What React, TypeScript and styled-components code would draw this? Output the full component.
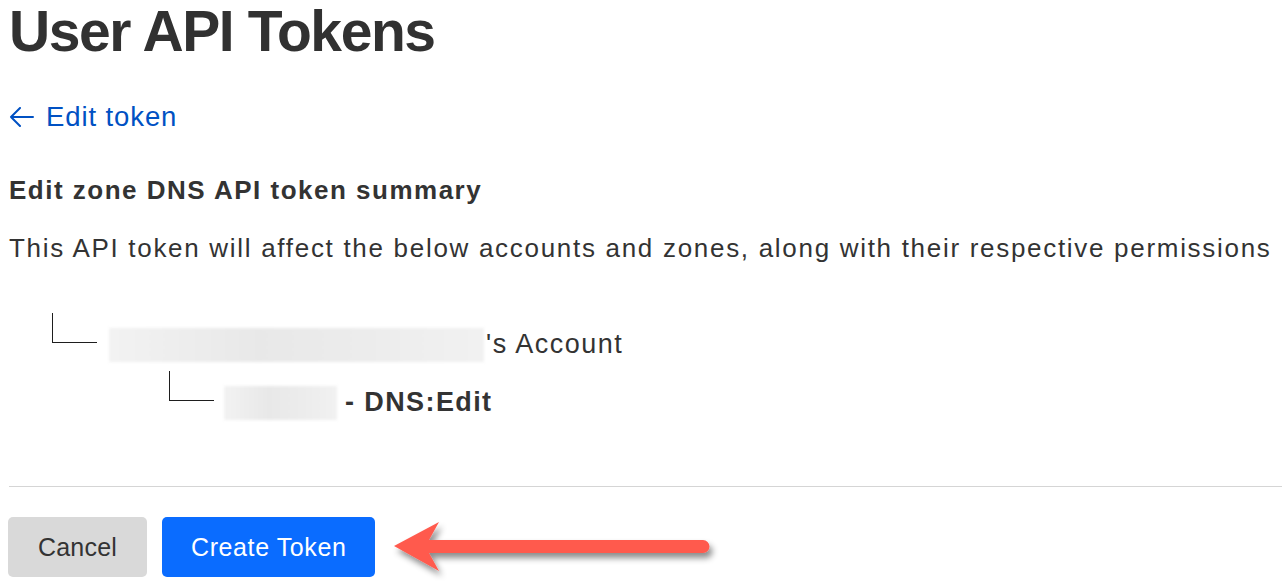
import React from "react";
import styled, { createGlobalStyle } from "styled-components";

const GlobalStyle = createGlobalStyle`
  html, body {
    margin: 0;
    padding: 0;
    background: #ffffff;
  }
  body {
    font-family: "Liberation Sans", Arial, sans-serif;
    color: #333333;
    overflow: hidden;
  }
`;

const Page = styled.div`
  width: 1282px;
  height: 586px;
  padding-left: 9px;
  box-sizing: border-box;
  display: flex;
  flex-direction: column;
`;

const Title = styled.h1`
  margin: 0;
  font-size: 57px;
  line-height: 62px;
  font-weight: 700;
  letter-spacing: -1.4px;
  color: #313131;
`;

const BackLink = styled.a`
  display: flex;
  align-items: center;
  gap: 12px;
  margin-top: 37px;
  font-size: 27.5px;
  line-height: 36px;
  letter-spacing: 0.9px;
  color: #0051c3;
  text-decoration: none;
  cursor: pointer;
`;

const SectionTitle = styled.h2`
  margin: 0;
  margin-top: 38px;
  font-size: 26px;
  line-height: 34px;
  font-weight: 700;
  letter-spacing: 1.5px;
  color: #333333;
`;

const Description = styled.p`
  margin: 0;
  margin-top: 24px;
  font-size: 26px;
  line-height: 34px;
  letter-spacing: 1.7px;
  color: #333333;
  white-space: nowrap;
`;

const Tree = styled.div`
  display: flex;
  flex-direction: column;
  margin-top: 48px;
  gap: 8px;
`;

const TreeRow = styled.div<{ $depth: number }>`
  display: flex;
  align-items: flex-start;
  padding-left: ${(p) => 43 + p.$depth * 117}px;
  height: 50px;
`;

const Elbow = styled.span`
  display: block;
  width: 44px;
  height: 29px;
  border-left: 1.5px solid #1e1e1e;
  border-bottom: 1.5px solid #1e1e1e;
  flex-shrink: 0;
`;

const Redacted = styled.span<{ $w: number }>`
  display: block;
  width: ${(p) => p.$w}px;
  height: 34px;
  margin-left: ${(p) => (p.$w > 200 ? 12 : 10)}px;
  margin-top: 15px;
  background: linear-gradient(90deg, #f2f2f2 0%, #e8e8e8 40%, #ececec 70%, #f1f1f1 100%);
  filter: blur(1.5px);
`;

const RowText = styled.span<{ $bold?: boolean }>`
  margin-top: 14px;
  margin-left: ${(p) => (p.$bold ? 8 : 2)}px;
  font-size: 27px;
  line-height: 34px;
  letter-spacing: ${(p) => (p.$bold ? 1.4 : 1.5)}px;
  font-weight: ${(p) => (p.$bold ? 700 : 400)};
  color: #333333;
  white-space: nowrap;
`;

const Divider = styled.hr`
  margin: 0;
  margin-top: 65px;
  border: none;
  border-top: 1px solid #d5d5d5;
  width: 100%;
`;

const Actions = styled.div`
  display: flex;
  align-items: center;
  gap: 15px;
  margin-top: 30px;
  margin-left: -1px;
`;

const Button = styled.button<{ $primary?: boolean }>`
  height: 60px;
  padding: 0 ${(p) => (p.$primary ? 29 : 30)}px;
  border: none;
  border-radius: 5px;
  font-family: inherit;
  font-size: 25px;
  letter-spacing: ${(p) => (p.$primary ? 0.6 : 0.2)}px;
  background: ${(p) => (p.$primary ? "#0a6cff" : "#d9d9d9")};
  color: ${(p) => (p.$primary ? "#ffffff" : "#333333")};
  cursor: pointer;
`;

const Callout = styled.svg`
  display: block;
  margin-left: 2px;
  overflow: visible;
`;

const ArrowLeft = () => (
  <svg width="25" height="20" viewBox="0 0 25 20" fill="none">
    <path d="M24 10H2M11 1L2 10l9 9" stroke="#0051c3" strokeWidth="2" strokeLinecap="round" strokeLinejoin="round" />
  </svg>
);

const RedArrow = () => (
  <Callout width="330" height="60" viewBox="0 0 330 60">
    <defs>
      <filter id="shadow" x="-10%" y="-50%" width="120%" height="200%">
        <feDropShadow dx="3" dy="5" stdDeviation="3" floodColor="#000" floodOpacity="0.45" />
      </filter>
    </defs>
    <g filter="url(#shadow)">
      <path
        d="M2 29 L47 5 L37 23 L311 23 A6.5 6.5 0 0 1 311 36 L37 36 L47 54 Z"
        fill="#ff5a4e"
      />
    </g>
  </Callout>
);

export default function App() {
  return (
    <>
      <GlobalStyle />
      <Page>
        <Title>User API Tokens</Title>
        <BackLink>
          <ArrowLeft />
          Edit token
        </BackLink>
        <SectionTitle>Edit zone DNS API token summary</SectionTitle>
        <Description>
          This API token will affect the below accounts and zones, along with their respective permissions
        </Description>
        <Tree>
          <TreeRow $depth={0}>
            <Elbow />
            <Redacted $w={375} />
            <RowText>'s Account</RowText>
          </TreeRow>
          <TreeRow $depth={1}>
            <Elbow />
            <Redacted $w={113} />
            <RowText $bold>- DNS:Edit</RowText>
          </TreeRow>
        </Tree>
        <Divider />
        <Actions>
          <Button>Cancel</Button>
          <Button $primary>Create Token</Button>
          <RedArrow />
        </Actions>
      </Page>
    </>
  );
}
